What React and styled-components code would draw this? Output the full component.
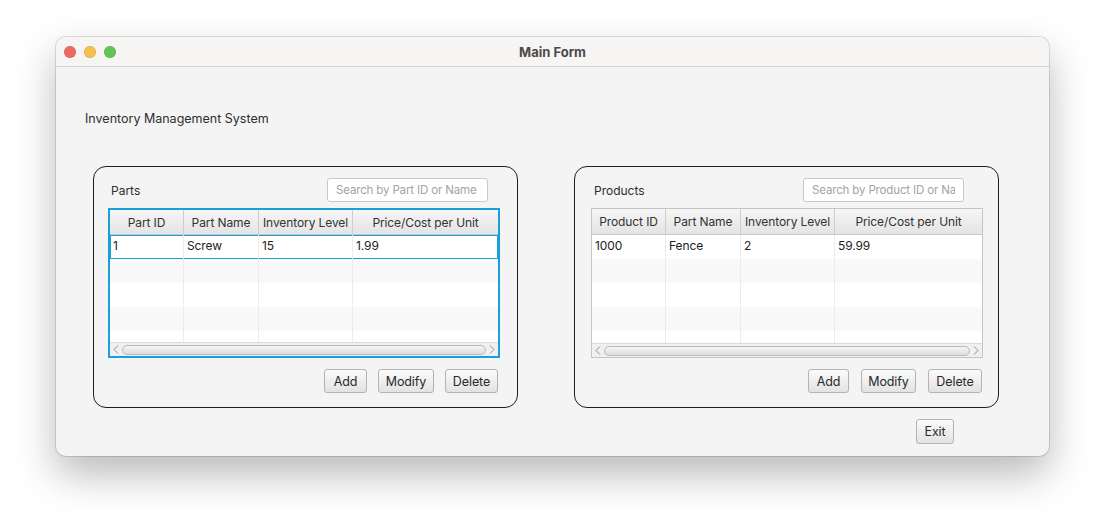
import React from 'react';
import styled, { createGlobalStyle } from 'styled-components';

const GlobalStyle = createGlobalStyle`
  html, body {
    margin: 0;
    padding: 0;
    background: #ffffff;
    font-family: Inter, "Liberation Sans", sans-serif;
  }
`;

const Page = styled.div`
  width: 1105px;
  height: 530px;
  padding: 37px 0 0 56px;
  box-sizing: border-box;
`;

const Window = styled.div`
  width: 993px;
  height: 419px;
  border-radius: 10px;
  background: #f4f4f4;
  box-shadow: 0 0 0 1px rgba(0, 0, 0, 0.12), 0 18px 40px rgba(0, 0, 0, 0.28);
  overflow: hidden;
  display: flex;
  flex-direction: column;
`;

const TitleBar = styled.div`
  height: 29px;
  flex: none;
  display: flex;
  align-items: center;
  position: relative;
  background: #f6f5f4;
  border-bottom: 1px solid #d4d4d4;
  padding-left: 8px;
  gap: 8px;
`;

const Light = styled.span`
  width: 12px;
  height: 12px;
  border-radius: 50%;
  background: ${p => p.$color};
  box-shadow: inset 0 0 0 0.5px rgba(0, 0, 0, 0.15);
`;

const Title = styled.div`
  position: absolute;
  left: 0;
  right: 0;
  text-align: center;
  font-size: 13px;
  font-weight: 700;
  color: #4a4a4a;
  pointer-events: none;
`;

const Content = styled.div`
  flex: 1;
  display: flex;
  flex-direction: column;
  padding: 44px 0 0 29px;
`;

const Heading = styled.div`
  font-size: 12.5px;
  line-height: 16px;
  color: #2e2e2e;
  height: 16px;
`;

const PanelRow = styled.div`
  display: flex;
  gap: 56px;
  margin: 39px 0 0 8px;
`;

const Panel = styled.div`
  width: 425px;
  height: 242px;
  box-sizing: border-box;
  border: 1px solid #1e1e1e;
  border-radius: 13px;
  display: flex;
  flex-direction: column;
  padding: ${p => p.$pad};
`;

const PanelTop = styled.div`
  display: flex;
  align-items: center;
  justify-content: space-between;
  height: 24px;
  padding: 0 ${p => p.$searchRight}px 0 ${p => p.$labelLeft}px;
`;

const PanelLabel = styled.span`
  font-size: 12px;
  color: #2e2e2e;
`;

const Search = styled.input`
  width: 161px;
  height: 24px;
  box-sizing: border-box;
  border: 1px solid #c9c9c9;
  border-radius: 3px;
  background: #fff;
  padding: 0 8px;
  font-family: inherit;
  font-size: 11.5px;
  letter-spacing: -0.15px;
  color: #333;
  outline: none;
  &::placeholder {
    color: #a3a3a3;
  }
`;

const TableBox = styled.div`
  margin-top: 6px;
  height: 150px;
  box-sizing: border-box;
  border: ${p => (p.$focused ? '2px solid #1a9fd6' : '1px solid #c4c4c4')};
  display: flex;
  flex-direction: column;
  background: #fff;
  overflow: hidden;
`;

const HeaderRow = styled.div`
  display: grid;
  grid-template-columns: ${p => p.$cols};
  height: ${p => p.$h}px;
  flex: none;
  background: linear-gradient(#f6f6f6, #e4e4e4);
  border-bottom: 1px solid #c8c8c8;
  box-sizing: border-box;
`;

const HeaderCell = styled.div`
  display: flex;
  align-items: center;
  justify-content: center;
  font-size: 12px;
  letter-spacing: -0.1px;
  color: #333;
  border-right: 1px solid #cdcdcd;
  white-space: nowrap;
  overflow: hidden;
  &:last-child {
    border-right: none;
  }
`;

const Body = styled.div`
  flex: 1;
  overflow: hidden;
`;

const Row = styled.div`
  display: grid;
  grid-template-columns: ${p => p.$cols};
  height: 24px;
  background: ${p => (p.$odd ? '#f9f9f9' : '#ffffff')};
  box-shadow: ${p => (p.$selected ? 'inset 0 0 0 1px #1a9fd6' : 'none')};
`;

const Cell = styled.div`
  display: flex;
  align-items: center;
  padding: 0 0 3px 3px;
  font-size: 12px;
  letter-spacing: -0.1px;
  color: #222;
  border-right: 1px solid #ececec;
  &:last-child {
    border-right: none;
  }
`;

const ScrollBar = styled.div`
  height: 13px;
  flex: none;
  display: flex;
  align-items: center;
  gap: 3px;
  padding: 0 3px;
  background: #f0f0f0;
  border-top: 1px solid #dadada;
`;

const Thumb = styled.div`
  flex: 1;
  height: 8px;
  border-radius: 5px;
  border: 1px solid #b9b9b9;
  background: linear-gradient(#f4f4f4, #dedede);
`;

const ButtonRow = styled.div`
  display: flex;
  justify-content: flex-end;
  gap: ${p => p.$gap}px;
  margin-top: 11px;
  padding-right: ${p => p.$right}px;
`;

const Button = styled.button`
  height: 24px;
  width: ${p => p.$w}px;
  padding: 0;
  border: 1px solid #b3b3b3;
  border-radius: 3px;
  background: linear-gradient(#fbfbfb, #e2e2e2);
  font-family: inherit;
  font-size: 12.5px;
  letter-spacing: -0.1px;
  color: #2a2a2a;
  cursor: pointer;
`;

const Footer = styled.div`
  display: flex;
  justify-content: flex-end;
  padding-right: 95px;
  margin-top: 11px;
`;

const ExitButton = styled(Button)`
  height: 25px;
`;

const Chevron = ({ dir }) => (
  <svg width="6" height="9" viewBox="0 0 6 9">
    <polyline
      points={dir === 'left' ? '5,0.5 1,4.5 5,8.5' : '1,0.5 5,4.5 1,8.5'}
      fill="none"
      stroke="#8c8c8c"
      strokeWidth="1"
    />
  </svg>
);

const DataTable = ({ cols, headers, rows, focused }) => {
  const filled = [...rows];
  while (filled.length < 5) filled.push(headers.map(() => ''));
  return (
    <TableBox $focused={focused}>
      <HeaderRow $cols={cols} $h={focused ? 25 : 26}>
        {headers.map(h => (
          <HeaderCell key={h}>{h}</HeaderCell>
        ))}
      </HeaderRow>
      <Body>
        {filled.map((r, i) => (
          <Row key={i} $cols={cols} $odd={i % 2 === 1} $selected={focused && i === 0}>
            {r.map((c, j) => (
              <Cell key={j}>{c}</Cell>
            ))}
          </Row>
        ))}
      </Body>
      <ScrollBar>
        <Chevron dir="left" />
        <Thumb />
        <Chevron dir="right" />
      </ScrollBar>
    </TableBox>
  );
};

const App = () => (
  <>
    <GlobalStyle />
    <Page>
      <Window>
        <TitleBar>
          <Light $color="#ed6a5e" />
          <Light $color="#f5bf4f" />
          <Light $color="#61c554" />
          <Title>Main Form</Title>
        </TitleBar>
        <Content>
          <Heading>Inventory Management System</Heading>
          <PanelRow>
            <Panel $pad="11px 17px 0 14px">
              <PanelTop $labelLeft={3} $searchRight={12}>
                <PanelLabel>Parts</PanelLabel>
                <Search placeholder="Search by Part ID or Name" />
              </PanelTop>
              <DataTable
                focused
                cols="74px 75px 94px 1fr"
                headers={['Part ID', 'Part Name', 'Inventory Level', 'Price/Cost per Unit']}
                rows={[['1', 'Screw', '15', '1.99']]}
              />
              <ButtonRow $gap={11} $right={2}>
                <Button $w={43}>Add</Button>
                <Button $w={56}>Modify</Button>
                <Button $w={53}>Delete</Button>
              </ButtonRow>
            </Panel>
            <Panel $pad="11px 15px 0 16px">
              <PanelTop $labelLeft={3} $searchRight={19}>
                <PanelLabel>Products</PanelLabel>
                <Search placeholder="Search by Product ID or Name" />
              </PanelTop>
              <DataTable
                cols="74px 75px 94px 1fr"
                headers={['Product ID', 'Part Name', 'Inventory Level', 'Price/Cost per Unit']}
                rows={[['1000', 'Fence', '2', '59.99']]}
              />
              <ButtonRow $gap={12} $right={1}>
                <Button $w={41}>Add</Button>
                <Button $w={55}>Modify</Button>
                <Button $w={54}>Delete</Button>
              </ButtonRow>
            </Panel>
          </PanelRow>
          <Footer>
            <ExitButton $w={38}>Exit</ExitButton>
          </Footer>
        </Content>
      </Window>
    </Page>
  </>
);

export default App;
